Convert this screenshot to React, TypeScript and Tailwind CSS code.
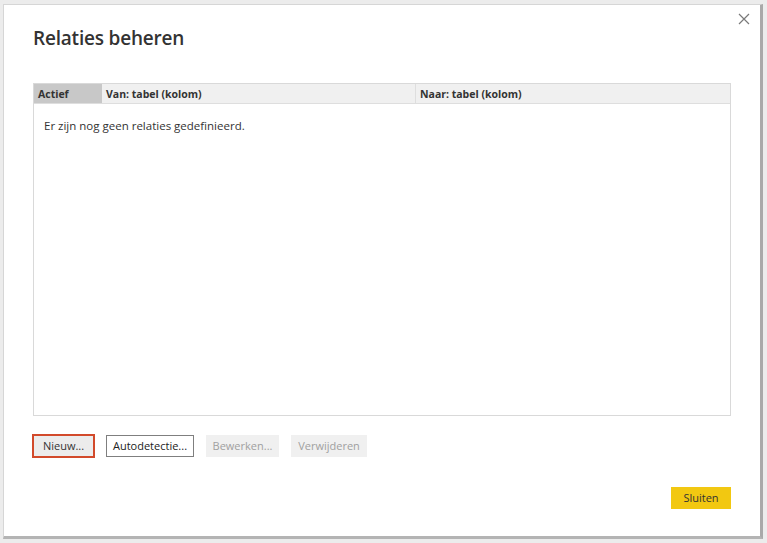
import React from "react";

export default function App() {
  const font = { fontFamily: '"Open Sans", "Noto Sans", Arial, sans-serif' };
  return (
    <div className="w-[767px] h-[543px] bg-[#ececec] pt-[4px] pl-[3px] overflow-hidden" style={font}>
      <div className="w-[760px] h-[535px] bg-white border-l border-t border-[#d6d6d6] border-r-[3px] border-r-[#a9a9a9] border-b-[3px] border-b-[#b4b4b4] flex flex-col relative">
        <button className="absolute right-[9px] top-[7px] w-[14px] h-[14px] flex items-center justify-center text-[#777]">
          <svg width="12" height="12" viewBox="0 0 12 12">
            <path d="M1 1 L11 11 M11 1 L1 11" stroke="#7a7a7a" strokeWidth="1.2" />
          </svg>
        </button>
        <h1 className="ml-[29px] mt-[20px] text-[19px] leading-[26px] font-semibold text-[#333] tracking-[-0.2px]">
          Relaties beheren
        </h1>
        <div className="ml-[29px] mt-[32px] w-[698px] h-[333px] border border-[#d9d9d9] flex flex-col">
          <div className="flex h-[20px] bg-[#f0f0f0] border-b border-[#dedede] text-[10.5px] font-bold text-[#333] leading-[20px]">
            <div className="w-[68px] bg-[#c8c8c8] pl-[4px]">Actief</div>
            <div className="w-[314px] pl-[4px] border-r border-[#dedede]">Van: tabel (kolom)</div>
            <div className="flex-1 pl-[4px]">Naar: tabel (kolom)</div>
          </div>
          <div className="pl-[10px] pt-[13px] text-[11.5px] text-[#333]">Er zijn nog geen relaties gedefinieerd.</div>
        </div>
        <div className="ml-[28px] mt-[18px] flex items-center h-[24px] text-[11px]">
          <button className="w-[63px] h-[24px] bg-[#ececec] border-2 border-[#d24a2b] text-[#333]">Nieuw...</button>
          <button className="ml-[11px] w-[88px] h-[22px] bg-white border border-[#7f7f7f] text-[#222]">Autodetectie...</button>
          <button className="ml-[12px] w-[73px] h-[22px] bg-[#f0f0f0] text-[#a0a0a0]">Bewerken...</button>
          <button className="ml-[12px] w-[76px] h-[22px] bg-[#f0f0f0] text-[#a0a0a0]">Verwijderen</button>
        </div>
        <div className="flex justify-end mr-[29px] mt-[29px]">
          <button className="w-[60px] h-[22px] bg-[#f2c811] text-[11px] text-[#333]">Sluiten</button>
        </div>
      </div>
    </div>
  );
}
